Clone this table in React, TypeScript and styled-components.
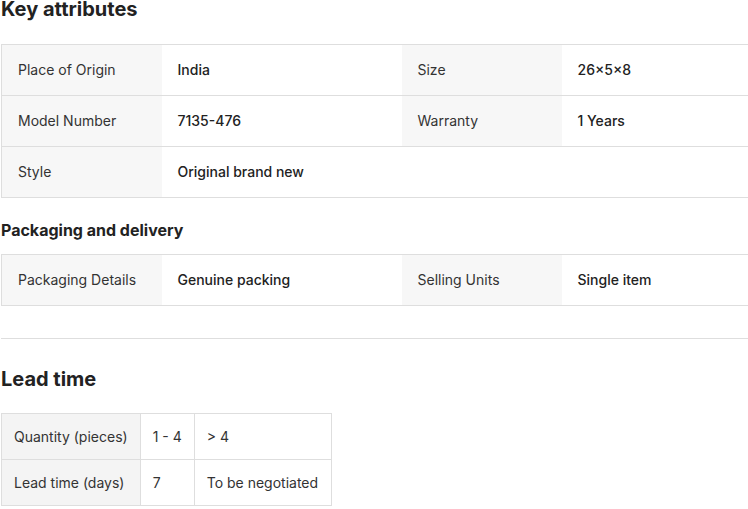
import React from "react";
import styled, { createGlobalStyle } from "styled-components";

const Global = createGlobalStyle`
  html, body { margin: 0; padding: 0; background: #fff; overflow: hidden; }
  body { font-family: Inter, "Noto Sans", Arial, sans-serif; color: #222; }
`;

const Page = styled.div`
  width: 748px;
  height: 509px;
  overflow: hidden;
  padding-left: 1px;
  padding-top: 1px;
  box-sizing: border-box;
`;

const Title = styled.h2<{ $size: number; $top: number; $bottom: number }>`
  margin: ${(p) => p.$top}px 0 ${(p) => p.$bottom}px 0;
  font-size: ${(p) => p.$size}px;
  line-height: 20px;
  font-weight: 700;
  color: #222;
  white-space: nowrap;
`;

const AttrTable = styled.table`
  border-collapse: collapse;
  width: 800px;
  table-layout: fixed;
  border-top: 1px solid #dedede;
  border-left: 1px solid #dedede;
  font-size: 14px;
`;

const AttrRow = styled.tr`
  height: 51px;
  border-bottom: 1px solid #dedede;
`;

const AttrCell = styled.td<{ $label?: boolean; $w: number }>`
  width: ${(p) => p.$w}px;
  padding: 0 16px 1px;
  box-sizing: border-box;
  background: ${(p) => (p.$label ? "#f7f7f7" : "#fff")};
  color: ${(p) => (p.$label ? "#333" : "#222")};
  font-weight: ${(p) => (p.$label ? 400 : 500)};
  white-space: nowrap;
  vertical-align: middle;
`;

const Divider = styled.hr`
  margin: 32px 0 0 0;
  border: none;
  border-top: 1px solid #dedede;
  height: 0;
  width: 800px;
`;

const LeadTable = styled.table`
  border-collapse: collapse;
  font-size: 14px;
`;

const LeadRow = styled.tr`
  height: 46px;
`;

const LeadCell = styled.td<{ $label?: boolean }>`
  border: 1px solid #dedede;
  padding: 0 12px;
  background: ${(p) => (p.$label ? "#f4f4f4" : "#fff")};
  color: #333;
  white-space: nowrap;
  vertical-align: middle;
`;

const LastCell = styled(LeadCell)`
  padding-right: 13px;
`;

type Pair = [string, string];

const keyRows: Pair[][] = [
  [
    ["Place of Origin", "India"],
    ["Size", "26×5×8"],
  ],
  [
    ["Model Number", "7135-476"],
    ["Warranty", "1 Years"],
  ],
  [["Style", "Original brand new"]],
];

const packRows: Pair[][] = [
  [
    ["Packaging Details", "Genuine packing"],
    ["Selling Units", "Single item"],
  ],
];

function Attrs({ rows }: { rows: Pair[][] }) {
  return (
    <AttrTable>
      <tbody>
        {rows.map((row, i) => (
          <AttrRow key={i}>
            {row.map(([k, v]) => (
              <React.Fragment key={k}>
                <AttrCell $label $w={160}>
                  {k}
                </AttrCell>
                <AttrCell $w={240}>{v}</AttrCell>
              </React.Fragment>
            ))}
            {row.length === 1 && (
              <>
                <AttrCell $w={160} />
                <AttrCell $w={240} />
              </>
            )}
          </AttrRow>
        ))}
      </tbody>
    </AttrTable>
  );
}

export default function App() {
  return (
    <>
      <Global />
      <Page>
        <Title $size={20} $top={-2} $bottom={25}>
          Key attributes
        </Title>
        <Attrs rows={keyRows} />
        <Title $size={16} $top={22} $bottom={14}>
          Packaging and delivery
        </Title>
        <Attrs rows={packRows} />
        <Divider />
        <Title $size={20} $top={30} $bottom={24}>
          Lead time
        </Title>
        <LeadTable>
          <tbody>
            <LeadRow>
              <LeadCell $label>Quantity (pieces)</LeadCell>
              <LeadCell>1 - 4</LeadCell>
              <LastCell>&gt; 4</LastCell>
            </LeadRow>
            <LeadRow>
              <LeadCell $label>Lead time (days)</LeadCell>
              <LeadCell>7</LeadCell>
              <LastCell>To be negotiated</LastCell>
            </LeadRow>
          </tbody>
        </LeadTable>
      </Page>
    </>
  );
}
